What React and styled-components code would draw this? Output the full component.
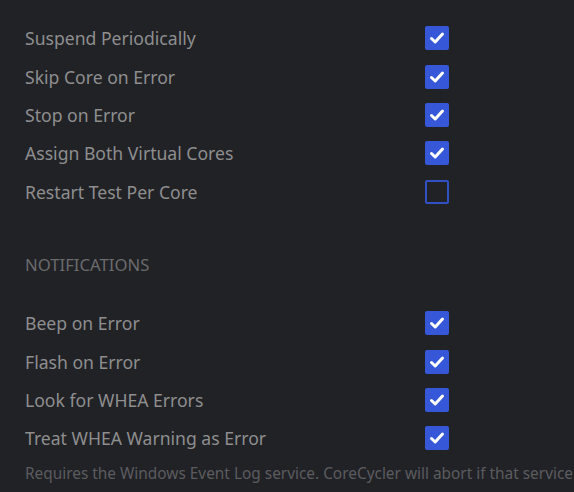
import React from "react";
import styled, { createGlobalStyle } from "styled-components";

const Global = createGlobalStyle`
  html, body {
    margin: 0;
    background: #212226;
    overflow: hidden;
  }
  body {
    font-family: "Noto Sans", "Open Sans", sans-serif;
  }
`;

const Panel = styled.div`
  width: 574px;
  height: 492px;
  padding: 19px 0 0 25px;
  box-sizing: border-box;
  overflow: hidden;
`;

const Row = styled.label`
  display: grid;
  grid-template-columns: 400px 24px;
  align-items: center;
  height: 38.4px;
  cursor: pointer;
`;

const Label = styled.span`
  font-size: 17.6px;
  color: #8e8e8f;
  white-space: nowrap;
`;

const Box = styled.span`
  width: 24px;
  height: 24px;
  box-sizing: border-box;
  border-radius: 2px;
  display: flex;
  align-items: center;
  justify-content: center;
  background: ${p => (p.checked ? "#3557d8" : "transparent")};
  border: ${p => (p.checked ? "none" : "2px solid #3050c4")};
`;

const Heading = styled.div`
  margin: 44px 0 29px;
  font-size: 16.7px;
  color: #6b6b6d;
  text-transform: uppercase;
  height: 20px;
  line-height: 20px;
`;

const Note = styled.div`
  margin-top: 5px;
  font-size: 15.4px;
  color: #5b5c5f;
  white-space: nowrap;
`;

const Check = () => (
  <svg width="16" height="14" viewBox="0 0 16 14">
    <path
      d="M2.5 7.5 L6.2 11 L13.5 3"
      fill="none"
      stroke="#fff"
      strokeWidth="3"
      strokeLinecap="round"
      strokeLinejoin="round"
    />
  </svg>
);

const Option = ({ label, checked }) => (
  <Row>
    <Label>{label}</Label>
    <Box checked={checked}>{checked && <Check />}</Box>
  </Row>
);

const general = [
  ["Suspend Periodically", true],
  ["Skip Core on Error", true],
  ["Stop on Error", true],
  ["Assign Both Virtual Cores", true],
  ["Restart Test Per Core", false]
];

const notifications = [
  ["Beep on Error", true],
  ["Flash on Error", true],
  ["Look for WHEA Errors", true],
  ["Treat WHEA Warning as Error", true]
];

export default function App() {
  return (
    <Panel>
      <Global />
      {general.map(([label, checked]) => (
        <Option key={label} label={label} checked={checked} />
      ))}
      <Heading>Notifications</Heading>
      {notifications.map(([label, checked]) => (
        <Option key={label} label={label} checked={checked} />
      ))}
      <Note>
        Requires the Windows Event Log service. CoreCycler will abort if that
        service
      </Note>
    </Panel>
  );
}
